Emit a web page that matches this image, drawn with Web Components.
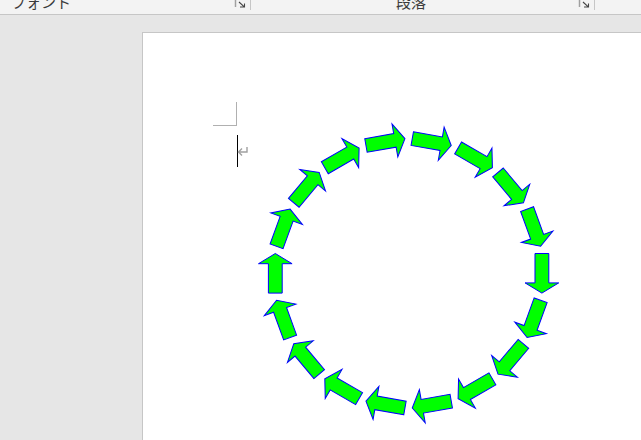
<!DOCTYPE html>
<html lang="ja"><head><meta charset="utf-8"><title>Word</title>
<style>
html,body{margin:0;padding:0;width:641px;height:440px;overflow:hidden;background:#e6e6e6}
body{display:flex;flex-direction:column;font-family:"Noto Sans CJK JP","Noto Sans",sans-serif}
</style></head><body>
<word-ribbon>
  <ribbon-group label="フォント" align="start" style="width:251px"></ribbon-group>
  <ribbon-group label="段落" align="center" style="width:344px"></ribbon-group>
</word-ribbon>
<doc-workspace>
  <doc-page>
    <margin-mark></margin-mark>
    <text-caret></text-caret>
    <arrow-ring count="18" cx="265.6" cy="240.3" r="133.3"></arrow-ring>
  </doc-page>
</doc-workspace>
<script>
class WordRibbon extends HTMLElement{constructor(){super();this.attachShadow({mode:'open'}).innerHTML=`<style>
:host{display:flex;height:14px;flex:none;background:#f3f3f3;border-bottom:1px solid #c6c6c6;overflow:hidden;box-sizing:content-box}
</style><slot></slot>`}}
class RibbonGroup extends HTMLElement{connectedCallback(){if(this.shadowRoot)return;
const label=this.getAttribute('label'),center=this.getAttribute('align')==='center';
this.attachShadow({mode:'open'}).innerHTML=`<style>
:host{display:flex;align-items:flex-start;height:14px;flex:none;box-sizing:border-box}
.label{flex:1;font-size:15px;line-height:20px;margin-top:-8px;color:#3c3c3c;white-space:nowrap;${center?'text-align:center;padding-right:7px;':'padding-left:11px;'}}
svg{flex:none;width:14px;height:9px;margin-right:2px}
.sep{flex:none;width:1px;height:10px;background:#c6c6c6}
</style><span class="label">${label}</span><svg viewBox="0 0 14 9"><path d="M1.5 0V7" stroke="#a0a0a0" stroke-width="1.5" fill="none"/><path d="M5 2L10 6.7M6 7H10.5V3.5" stroke="#444" stroke-width="1.1" fill="none"/></svg><span class="sep"></span>`}}
class DocWorkspace extends HTMLElement{constructor(){super();this.attachShadow({mode:'open'}).innerHTML=`<style>
:host{display:block;flex:1;padding:17px 0 0 142px;overflow:hidden;min-height:0}
</style><slot></slot>`}}
class DocPage extends HTMLElement{constructor(){super();this.attachShadow({mode:'open'}).innerHTML=`<style>
:host{display:block;position:relative;background:#fff;border:1px solid #c6c6c6;border-width:1px 0 0 1px;height:500px;padding:69px 0 0 70px}
</style><slot></slot>`}}
class MarginMark extends HTMLElement{constructor(){super();this.attachShadow({mode:'open'}).innerHTML=`<style>
:host{display:block;width:24px;height:24px;box-sizing:border-box;border-right:1px solid #b0b0b0;border-bottom:1px solid #b0b0b0}
</style>`}}
class TextCaret extends HTMLElement{constructor(){super();this.attachShadow({mode:'open'}).innerHTML=`<style>
:host{display:flex;align-items:flex-start;height:32px;margin-top:9px;margin-left:24px}
i{display:block;width:1px;height:32px;background:#000;flex:none}
svg{display:block;width:11px;height:10px;flex:none;margin-left:-1px;margin-top:11px}
</style><i></i><svg viewBox="0 0 11 10"><path d="M10 1V6H1.5M5 2.5L1.5 6L5 9.5" fill="none" stroke="#a0a0a0" stroke-width="1.4"/></svg>`}}
class ArrowRing extends HTMLElement{connectedCallback(){if(this.shadowRoot)return;
const n=+this.getAttribute('count'),cx=+this.getAttribute('cx'),cy=+this.getAttribute('cy'),r=+this.getAttribute('r');
let s='';
for(let i=0;i<n;i++){const a=-100+i*360/n;const x=cx+r*Math.cos(a*Math.PI/180),y=cy+r*Math.sin(a*Math.PI/180);
s+=`<polygon transform="translate(${x.toFixed(2)} ${y.toFixed(2)}) rotate(${(a+90).toFixed(2)})" points="-19.8,-6.9 9.6,-6.9 9.6,-16.8 19.8,0 9.6,16.8 9.6,6.9 -19.8,6.9"/>`}
this.attachShadow({mode:'open'}).innerHTML=`<style>
:host{position:absolute;left:0;top:0;display:block;width:500px;height:410px}
svg{display:block;width:100%;height:100%}
polygon{fill:#00ff00;stroke:#0000ff;stroke-width:1;stroke-linejoin:miter}
</style><svg viewBox="0 0 500 410">${s}</svg>`}}
customElements.define('word-ribbon',WordRibbon);
customElements.define('ribbon-group',RibbonGroup);
customElements.define('doc-workspace',DocWorkspace);
customElements.define('doc-page',DocPage);
customElements.define('margin-mark',MarginMark);
customElements.define('text-caret',TextCaret);
customElements.define('arrow-ring',ArrowRing);
</script>
</body></html>
